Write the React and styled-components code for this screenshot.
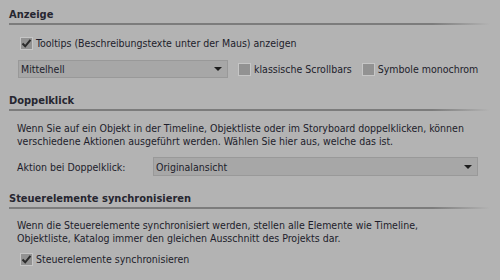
import React from "react";
import styled, { createGlobalStyle } from "styled-components";

const GlobalStyle = createGlobalStyle`
  html, body {
    margin: 0;
    padding: 0;
    background: #b3b3b3;
  }
  body {
    font-family: Tahoma, "DejaVu Sans Condensed", "Liberation Sans", sans-serif;
    font-size: 10.5px;
    color: #1d1d2b;
  }
`;

const Page = styled.div`
  width: 500px;
  height: 280px;
  box-sizing: border-box;
  padding: 8px 10px 0 9px;
  overflow: hidden;
`;

const Section = styled.section`
  margin-top: ${(p) => p.top || 0}px;
`;

const Heading = styled.div`
  font-weight: bold;
  font-size: 11px;
  line-height: 14px;
  height: 14px;
  color: #262630;
`;

const Rule = styled.div`
  margin-top: 1px;
  height: 2px;
  background: linear-gradient(to right, #7c7c7c 0%, #7c7c7c 88%, rgba(124, 124, 124, 0) 100%);
`;

const Body = styled.div`
  padding-left: ${(p) => p.indent || 8}px;
  padding-top: ${(p) => p.top || 0}px;
`;

const Row = styled.div`
  display: flex;
  align-items: center;
  gap: ${(p) => p.gap || 0}px;
  margin-top: ${(p) => p.top || 0}px;
  height: ${(p) => p.h || 13}px;
`;

const CheckLabel = styled.label`
  display: flex;
  align-items: center;
  gap: 3px;
  line-height: 13px;
  white-space: nowrap;
`;

const Box = styled.span`
  width: 13px;
  height: 13px;
  box-sizing: border-box;
  border: 1px solid #c6c6c6;
  background: #929292;
  display: inline-flex;
  align-items: center;
  justify-content: center;
  flex: none;
`;

const Select = styled.div`
  box-sizing: border-box;
  width: ${(p) => p.w}px;
  height: ${(p) => p.h || 18}px;
  background: #a7a7a7;
  border: 1px solid #999999;
  display: flex;
  align-items: center;
  justify-content: space-between;
  padding: 0 5px 0 2px;
  flex: none;
`;

const Arrow = styled.span`
  width: 0;
  height: 0;
  border-left: 4px solid transparent;
  border-right: 4px solid transparent;
  border-top: 4px solid #1e1e1e;
`;

const Para = styled.p`
  margin: 0;
  line-height: 13px;
`;

const FieldLabel = styled.span`
  width: 136px;
  flex: none;
`;

function Check({ checked, children }) {
  return (
    <CheckLabel>
      <Box>
        {checked && (
          <svg width="11" height="11" viewBox="0 0 11 11">
            <path d="M1.5 5.5 L4.2 8.3 L9.5 1.8" fill="none" stroke="#2b2b2b" strokeWidth="2" />
          </svg>
        )}
      </Box>
      {children}
    </CheckLabel>
  );
}

export default function App() {
  return (
    <>
      <GlobalStyle />
      <Page>
        <Section>
          <Heading>Anzeige</Heading>
          <Rule />
          <Body indent={11} top={12}>
            <Check checked>Tooltips (Beschreibungstexte unter der Maus) anzeigen</Check>
            <Row top={10} h={18} gap={10}>
              <Select w={210} style={{ marginLeft: -2 }}>
                <span>Mittelhell</span>
                <Arrow />
              </Select>
              <Check>klassische Scrollbars</Check>
              <Check>Symbole monochrom</Check>
            </Row>
          </Body>
        </Section>

        <Section top={16}>
          <Heading>Doppelklick</Heading>
          <Rule />
          <Body top={11}>
            <Para>
              Wenn Sie auf ein Objekt in der Timeline, Objektliste oder im Storyboard doppelklicken, können
              <br />
              verschiedene Aktionen ausgeführt werden. Wählen Sie hier aus, welche das ist.
            </Para>
            <Row top={9} h={19}>
              <FieldLabel>Aktion bei Doppelklick:</FieldLabel>
              <Select w={325} h={19}>
                <span>Originalansicht</span>
                <Arrow />
              </Select>
            </Row>
          </Body>
        </Section>

        <Section top={16}>
          <Heading>Steuerelemente synchronisieren</Heading>
          <Rule />
          <Body top={10}>
            <Para>
              Wenn die Steuerelemente synchronisiert werden, stellen alle Elemente wie Timeline,
              <br />
              Objektliste, Katalog immer den gleichen Ausschnitt des Projekts dar.
            </Para>
            <Row top={8} style={{ paddingLeft: 3 }}>
              <Check checked>Steuerelemente synchronisieren</Check>
            </Row>
          </Body>
        </Section>
      </Page>
    </>
  );
}
